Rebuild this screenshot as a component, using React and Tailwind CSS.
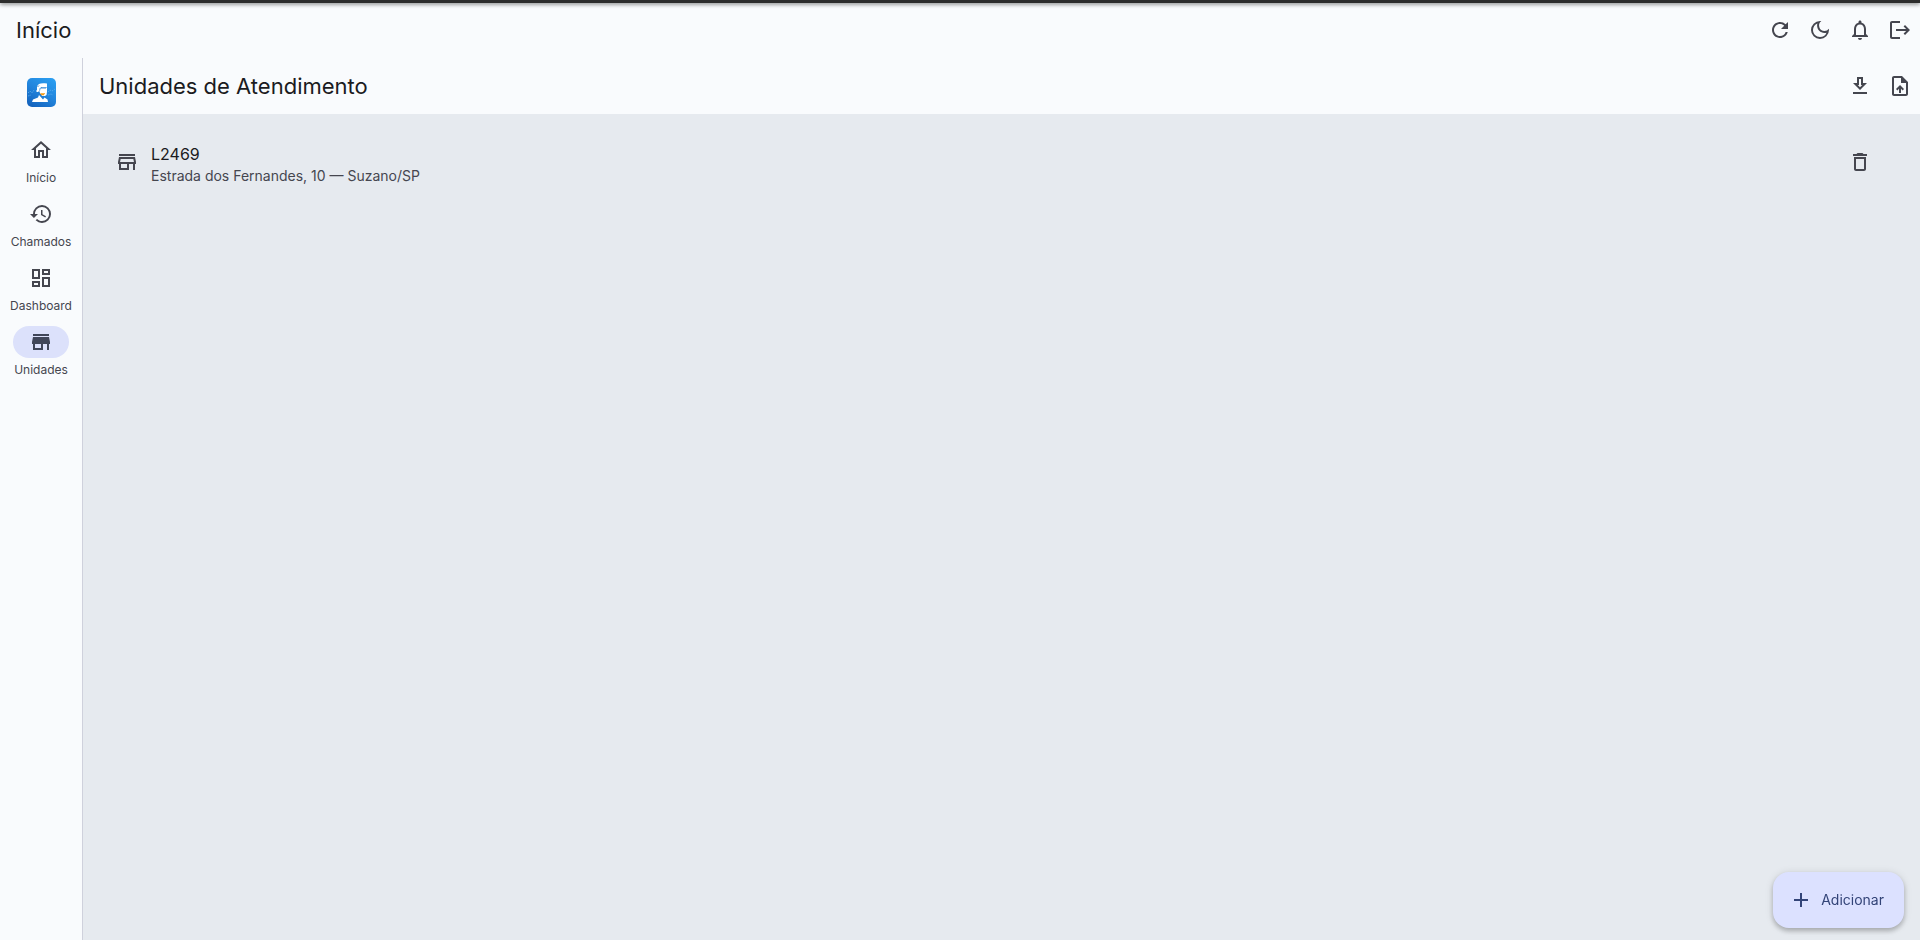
import React from "react";
import {
  MdAdd,
  MdHistory,
  MdLogout,
  MdNotificationsNone,
  MdOutlineDarkMode,
  MdOutlineDashboard,
  MdOutlineDelete,
  MdOutlineDownload,
  MdOutlineHome,
  MdOutlineStore,
  MdOutlineUploadFile,
  MdRefresh,
  MdStore,
} from "react-icons/md";

const navItems = [
  { label: "Início", icon: MdOutlineHome },
  { label: "Chamados", icon: MdHistory },
  { label: "Dashboard", icon: MdOutlineDashboard },
  { label: "Unidades", icon: MdStore, active: true },
];

const units = [
  { name: "L2469", address: "Estrada dos Fernandes, 10 — Suzano/SP" },
];

function IconButton({ label, icon: Icon }) {
  return (
    <button
      type="button"
      aria-label={label}
      className="flex size-10 shrink-0 items-center justify-center rounded-full text-[#45464f] hover:bg-black/5"
    >
      <Icon className="size-6" />
    </button>
  );
}

function Logo() {
  return (
    <svg viewBox="0 0 29 29" className="size-[29px]" aria-hidden="true">
      <defs>
        <linearGradient id="logo-bg" x1="0.8" y1="0" x2="0.2" y2="1">
          <stop offset="0" stopColor="#2a9df0" />
          <stop offset="0.5" stopColor="#2284dc" />
          <stop offset="1" stopColor="#1463bd" />
        </linearGradient>
      </defs>
      <rect width="29" height="29" rx="5" fill="url(#logo-bg)" />
      <path
        d="M1 15l2-2 2 2 2-3M1 18l3-1M21 14l2-2 2 1 3-2M21 17l3-1 2 1"
        fill="none"
        stroke="#65b5ee"
        strokeWidth="0.7"
        strokeDasharray="1.5 1"
      />
      <path d="M10 12V8.500C11 5.500 14 4.500 20 5.500V9h-5.500l-2 1.500V14H9.500v-2z" fill="#fff" />
      <path d="M13.500 10.500l1.500-1h5v4.500l-.5 3-1.500 1h-3l-2.500-3z" fill="#fff" />
      <path d="M5 24l1-2.500 5-2 1-2.500 4 4.500 1.500-2 3 2 .5 2.500z" fill="#fff" />
      <path d="M12 7.500l-1.500 1.500M14 10h5M11.500 13.500l1 2 2 2" fill="none" stroke="#1b6fc0" strokeWidth="0.8" />
      <path d="M13 15.300h5v1h-1v1h-2.500z" fill="#f59b14" />
    </svg>
  );
}

export default function App() {
  return (
    <div className="flex min-h-screen flex-col bg-[#f9fbfd] font-['Inter',sans-serif] text-[#1b1b21]">
      <div className="h-[3px] shrink-0 bg-[#2d2d2d] shadow-[0_1px_4px_rgba(0,0,0,0.6)]" />

      <header className="flex h-[55px] shrink-0 items-start justify-between pl-4">
        <h1 className="pt-[13px] text-[22px] leading-7">Início</h1>
        <div className="flex pt-[7px]">
          <IconButton label="Atualizar" icon={MdRefresh} />
          <IconButton label="Modo escuro" icon={MdOutlineDarkMode} />
          <IconButton label="Notificações" icon={MdNotificationsNone} />
          <IconButton label="Sair" icon={MdLogout} />
        </div>
      </header>

      <div className="flex grow">
        <nav
          aria-label="Principal"
          className="flex w-[83px] shrink-0 flex-col items-center border-r border-[#cfd1dc] pt-5"
        >
          <Logo />
          <ul className="mt-[27px] flex flex-col gap-3">
            {navItems.map(({ label, icon: Icon, active }) => (
              <li key={label}>
                <a
                  href="#"
                  aria-current={active ? "page" : undefined}
                  className="flex h-[52px] flex-col items-center gap-1"
                >
                  <span
                    className={
                      active
                        ? "flex h-8 w-14 items-center justify-center rounded-full bg-[#dce1fb] text-[#404659]"
                        : "flex h-8 w-14 items-center justify-center rounded-full text-[#45464f]"
                    }
                  >
                    <Icon className="size-6" />
                  </span>
                  <span className="text-xs text-[#45464f]">{label}</span>
                </a>
              </li>
            ))}
          </ul>
        </nav>

        <main className="flex min-w-0 grow flex-col bg-[#e6eaef]">
          <div className="flex h-14 shrink-0 items-center justify-between bg-[#f9fbfd] pl-4">
            <h2 className="text-[22px] leading-7">Unidades de Atendimento</h2>
            <div className="flex">
              <IconButton label="Baixar" icon={MdOutlineDownload} />
              <IconButton label="Enviar arquivo" icon={MdOutlineUploadFile} />
            </div>
          </div>

          <ul className="grow pt-3 pr-10 pl-8">
            {units.map(({ name, address }) => (
              <li key={name} className="flex h-[72px] items-center">
                <MdOutlineStore className="size-6 shrink-0 text-[#45464f]" />
                <div className="ml-3 grow pt-1">
                  <p className="text-base leading-6">{name}</p>
                  <p className="text-sm leading-5 text-[#45464f]">{address}</p>
                </div>
                <IconButton label={"Excluir " + name} icon={MdOutlineDelete} />
              </li>
            ))}
          </ul>
        </main>
      </div>

      <button
        type="button"
        className="fixed right-4 bottom-3 flex h-14 items-center gap-2 rounded-2xl bg-[#dce1ff] pr-5 pl-4 text-sm text-[#334478] shadow-[0_3px_5px_rgba(0,0,0,0.22),0_1px_8px_rgba(0,0,0,0.12)]"
      >
        <MdAdd className="size-6" />
        Adicionar
      </button>
    </div>
  );
}
